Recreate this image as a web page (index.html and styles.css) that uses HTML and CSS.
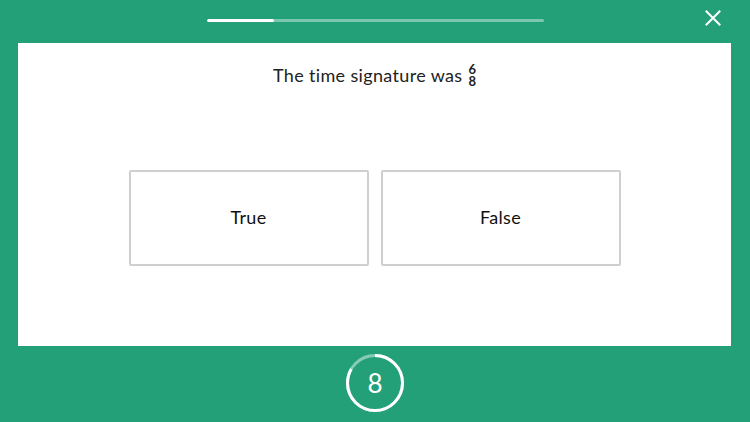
FILE: index.html
```html
<!DOCTYPE html>
<html>
<head>
<meta charset="utf-8">
<link rel="stylesheet" href="styles.css">
</head>
<body>
<div class="screen">
  <header class="topbar">
    <div class="progress"><div class="progress-fill" style="width:20%"></div></div>
    <button class="close" aria-label="Close">
      <svg width="16" height="16" viewBox="0 0 16 16"><path d="M1.5 1.5L14.5 14.5M14.5 1.5L1.5 14.5" stroke="#fff" stroke-width="2" stroke-linecap="square"/></svg>
    </button>
  </header>
  <main class="card">
    <p class="question">The time signature was <span class="frac"><span>6</span><span>8</span></span></p>
    <div class="answers">
      <button class="answer">True</button>
      <button class="answer">False</button>
    </div>
  </main>
  <footer class="footer">
    <div class="timer">
      <svg width="60" height="60" viewBox="0 0 60 60">
        <circle cx="30" cy="30" r="27.5" fill="none" stroke="rgba(255,255,255,0.45)" stroke-width="3"/>
        <circle cx="30" cy="30" r="27.5" fill="none" stroke="#fff" stroke-width="3" stroke-dasharray="144 173" transform="rotate(-90 30 30)"/>
      </svg>
      <span class="timer-num">8</span>
    </div>
  </footer>
</div>
</body>
</html>
```
FILE: styles.css
```css
html, body {
  margin: 0;
  padding: 0;
}
body {
  background: #24a078;
  font-family: "Lato", "Noto Sans", sans-serif;
  width: 750px;
  height: 422px;
  overflow: hidden;
}
.screen {
  display: flex;
  flex-direction: column;
  height: 422px;
}
.topbar {
  position: relative;
  height: 43px;
  display: flex;
  justify-content: center;
  align-items: flex-start;
}
.progress {
  margin-top: 19px;
  width: 337px;
  height: 3px;
  border-radius: 2px;
  background: rgba(255,255,255,0.4);
  overflow: hidden;
}
.progress-fill {
  height: 100%;
  background: #fff;
  border-radius: 2px;
}
.close {
  position: absolute;
  right: 29px;
  top: 10px;
  background: none;
  border: 0;
  padding: 0;
  width: 16px;
  height: 16px;
  cursor: pointer;
}
.close svg { display: block; }
.card {
  background: #fff;
  margin: 0 19px 0 18px;
  height: 303px;
  display: flex;
  flex-direction: column;
  align-items: center;
}
.question {
  margin: 20px 0 0;
  font-size: 18px;
  line-height: 24px;
  letter-spacing: 0.35px;
  color: #222;
  display: flex;
  align-items: center;
}
.frac {
  display: inline-flex;
  flex-direction: column;
  font-size: 13px;
  line-height: 12px;
  margin-left: 6px;
  font-weight: 700;
  align-items: center;
  letter-spacing: 0;
}
.answers {
  margin-top: 83px;
  display: flex;
  gap: 12px;
}
.answer {
  width: 240px;
  height: 96px;
  background: #fff;
  border: 2px solid #cfcfcf;
  border-radius: 2px;
  font-family: inherit;
  font-size: 18px;
  letter-spacing: 0.3px;
  color: #111;
  padding: 0 0 2px;
}
.footer {
  display: flex;
  justify-content: center;
  padding-top: 7px;
}
.timer {
  position: relative;
  width: 60px;
  height: 60px;
  display: flex;
  align-items: center;
  justify-content: center;
}
.timer svg {
  position: absolute;
  left: 0;
  top: 0;
}
.timer-num {
  color: #fff;
  font-size: 26px;
  font-weight: 400;
  line-height: 1;
}
```
